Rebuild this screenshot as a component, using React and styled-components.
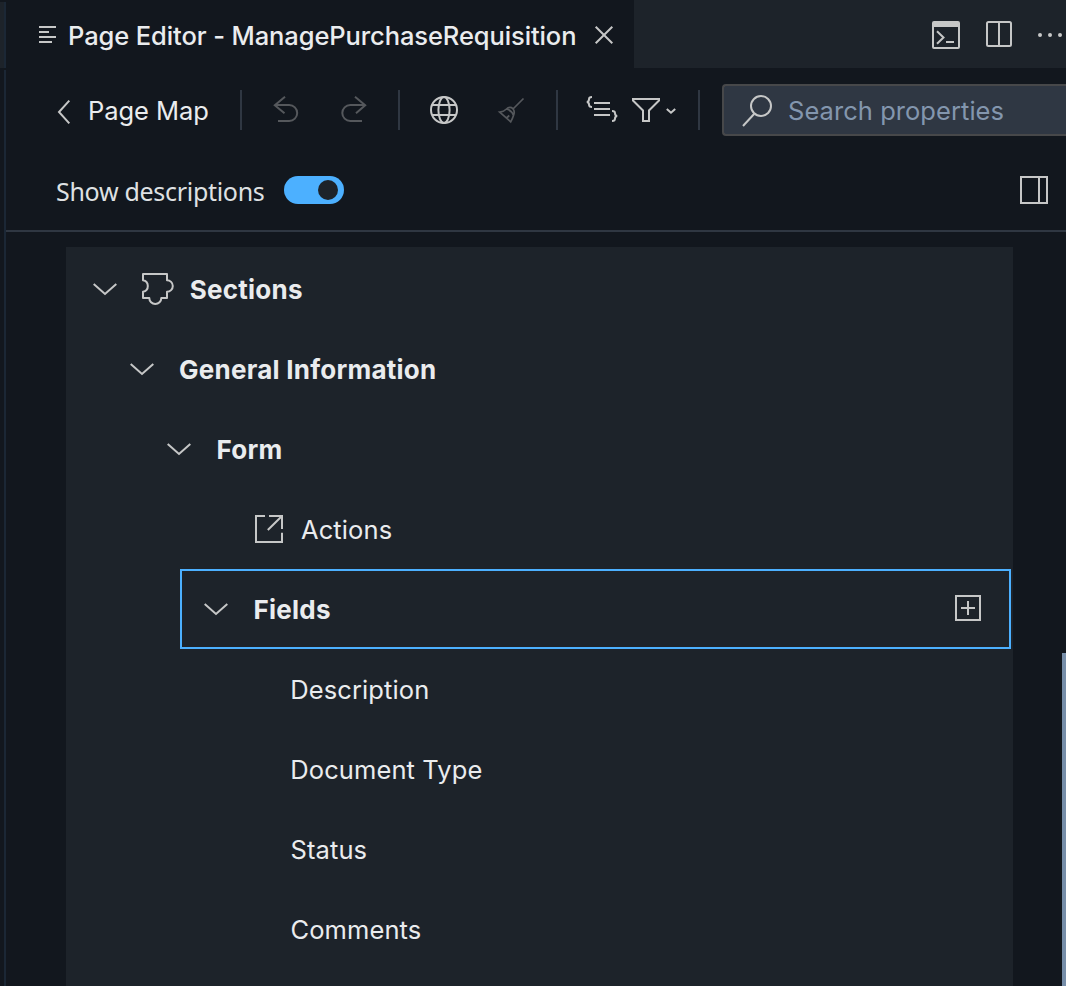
import React from "react";
import styled, { createGlobalStyle } from "styled-components";

const GlobalStyle = createGlobalStyle`
  * { box-sizing: border-box; }
  body { margin: 0; background: #12171e; overflow: hidden; }
`;

const Window = styled.div`
  display: flex;
  width: 100%;
  height: 986px;
  overflow: hidden;
  background: #12171e;
  color: #eaecee;
  font-family: Inter, "Liberation Sans", sans-serif;
  font-size: 25.5px;
`;

const Gutter = styled.div`
  flex: none;
  width: 6px;
  display: flex;
  flex-direction: column;
  gap: 2px;
  padding-top: 2px;
`;

const GutterPart = styled.div`
  height: ${(p) => p.$height || "auto"};
  flex: ${(p) => (p.$height ? "none" : 1)};
  background: ${(p) => p.$color};
  border-right: 2px solid #1b2735;
`;

const Editor = styled.div`
  flex: 1;
  min-width: 0;
  display: flex;
  flex-direction: column;
`;

const TabBar = styled.div`
  flex: none;
  display: flex;
  height: 68px;
  background: #1d232a;
`;

const Tab = styled.div`
  display: flex;
  align-items: center;
  width: 628px;
  padding: 2px 0 0 33px;
  background: #12171e;
`;

const TabActions = styled.div`
  display: flex;
  align-items: flex-start;
  gap: 26px;
  padding: 21px 0 0 298px;
`;

const Text = styled.span`
  white-space: nowrap;
  line-height: 32px;
  font-family: ${(p) => p.$font || "inherit"};
  font-size: ${(p) => p.$size || 25.5}px;
  font-weight: ${(p) => p.$weight || 400};
  letter-spacing: ${(p) => p.$spacing || 0}px;
  margin-left: ${(p) => p.$left || 0}px;
`;

const TabTitle = styled(Text)`
  width: 515px;
  margin-left: 11px;
  padding-top: 2px;
`;

const Icon = styled.svg`
  flex: none;
  display: block;
  overflow: visible;
  fill: none;
  stroke: ${(p) => (p.$dim ? "#55585c" : "#c6c7c7")};
  stroke-width: ${(p) => p.$stroke || 2};
  margin-left: ${(p) => p.$left || 0}px;
  margin-top: ${(p) => p.$top || 0}px;
`;

const Toolbar = styled.div`
  flex: none;
  display: flex;
  height: 52px;
  margin-top: 16px;
  padding-left: 52px;
`;

const BackLink = styled.div`
  display: flex;
  align-items: flex-start;
  width: 182px;
  padding-top: 11px;
`;

const ToolGroup = styled.div`
  display: flex;
  align-items: flex-start;
  width: ${(p) => p.$width}px;
  padding-top: 12px;
`;

const Separator = styled.div`
  flex: none;
  width: 2px;
  height: 40px;
  margin-top: 6px;
  background: #2f3742;
`;

const SearchBox = styled.div`
  flex: 1;
  display: flex;
  align-items: flex-start;
  min-width: 0;
  margin-left: 22px;
  padding: 9px 0 0 18px;
  overflow: hidden;
  color: #8396ae;
  background: #2f3743;
  border: 2px solid #47484a;
  border-right: 0;
  border-radius: 4px 0 0 4px;
`;

const OptionsBar = styled.div`
  flex: none;
  display: flex;
  align-items: flex-start;
  height: 96px;
  padding: 40px 18px 0 50px;
  border-bottom: 2px solid #2f3742;
`;

const OptionLabel = styled(Text)`
  width: 228px;
  margin-top: -1px;
  color: #dfe1e3;
`;

const Switch = styled.div`
  display: flex;
  justify-content: flex-end;
  width: 60px;
  height: 28px;
  padding: 4px 6px;
  border-radius: 14px;
  background: #4cb0ff;
`;

const Knob = styled.div`
  width: 20px;
  height: 20px;
  border-radius: 50%;
  background: #1d232a;
`;

const Spacer = styled.div`
  flex: 1;
`;

const Content = styled.div`
  flex: 1;
  display: flex;
  justify-content: space-between;
  min-height: 0;
`;

const Tree = styled.div`
  width: 947px;
  margin: 15px 0 0 60px;
  padding: 2px 2px 0 0;
  background: #1d232a;
`;

const Row = styled.div`
  display: flex;
  align-items: center;
  height: 80px;
  margin-left: ${(p) => p.$indent}px;
  padding: 0 28px 0 22px;
  border: 2px solid ${(p) => (p.$selected ? "#4cb0ff" : "transparent")};
`;

const RowLabel = styled(Text)`
  padding-top: 2px;
`;

const Scrollbar = styled.div`
  width: 4px;
  margin-top: 421px;
  background: #778ea9;
`;

const ChevronDown = () => (
  <Icon width="24" height="12" viewBox="0 0 24 12" $top={-1}>
    <path d="M.7.9 12 11 23.3.9" />
  </Icon>
);

const Puzzle = () => (
  <Icon width="32" height="32" viewBox="0 0 32 32" $left={25} $top={-1}>
    <path
      strokeLinejoin="round"
      d="M1 1H25V7.2A5.8 5.8 0 0 1 25 18.8V25H19.3A6 6 0 0 1 7.3 25H1V18.8A5.9 5.9 0 0 0 1 7.2Z"
    />
  </Icon>
);

const OpenSquare = () => (
  <Icon width="28" height="28" viewBox="0 0 28 28" $left={51}>
    <path d="M10 1H1V27H27V17.8M14 1H27V14M27 1 12.8 15" />
  </Icon>
);

const AddSquare = () => (
  <Icon width="26" height="26" viewBox="0 0 26 26" $top={-2}>
    <path d="M1 1H25V25H1ZM6 13H20M13 6V20" />
  </Icon>
);

const rows = [
  { label: "Sections", indent: 3, group: true, icon: <Puzzle />, gap: 15.7 },
  { label: "General Information", indent: 40, group: true, gap: 25 },
  { label: "Form", indent: 77, group: true, gap: 25.5 },
  { label: "Actions", indent: 114, icon: <OpenSquare />, gap: 18 },
  { label: "Fields", indent: 114, group: true, gap: 25.5, selected: true },
  { label: "Description", indent: 114, gap: 86.3 },
  { label: "Document Type", indent: 114, gap: 86.3 },
  { label: "Status", indent: 114, gap: 86.5 },
  { label: "Comments", indent: 114, gap: 86.5 },
];

function TreeRow({ row }) {
  return (
    <Row $indent={row.indent} $selected={row.selected}>
      {row.group && <ChevronDown />}
      {row.icon}
      <RowLabel
        $left={row.gap}
        $size={row.group ? 26 : 25.5}
        $weight={row.group ? 700 : 400}
        $spacing={row.group ? 0.25 : 0.1}
      >
        {row.label}
      </RowLabel>
      <Spacer />
      {row.selected && <AddSquare />}
    </Row>
  );
}

export default function App() {
  return (
    <>
      <GlobalStyle />
      <Window>
        <Gutter>
          <GutterPart $height="66px" $color="#1d232a" />
          <GutterPart $color="#12171e" />
        </Gutter>
        <Editor>
          <TabBar>
            <Tab>
              <Icon width="18" height="18" viewBox="0 0 18 18" $top={-2}>
                <path d="M0 2H17M0 7H10M0 12H17M0 17H13" />
              </Icon>
              <TabTitle $weight={500} $spacing={-0.1}>
                Page Editor - ManagePurchaseRequisition
              </TabTitle>
              <Icon width="18" height="18" viewBox="0 0 18 18" $left={12.4}>
                <path d="M.7.7 17.3 17.3M17.3.7.7 17.3" />
              </Icon>
            </Tab>
            <TabActions>
              <Icon width="28" height="28" viewBox="0 0 28 28">
                <rect x="1" y="1" width="26" height="26" rx="1" />
                <path d="M1 3.5H27" strokeWidth="5" />
                <path d="M5 10.3 11.5 16.5 5 22.7M14 21H22" />
              </Icon>
              <Icon width="26" height="26" viewBox="0 0 26 26">
                <rect x="1" y="1" width="24" height="24" rx="1.5" />
                <path d="M13 1V25" />
              </Icon>
              <Icon width="28" height="28" viewBox="0 0 28 28">
                <path d="M2 14h.01M12 14h.01M22 14h.01" strokeWidth="4" strokeLinecap="round" />
              </Icon>
            </TabActions>
          </TabBar>
          <Toolbar>
            <BackLink>
              <Icon width="12" height="24" viewBox="0 0 12 24" $top={5}>
                <path d="M11.3.7 1 12 11.3 23.3" />
              </Icon>
              <Text $left={18} $spacing={-0.05}>Page Map</Text>
            </BackLink>
            <Separator />
            <ToolGroup $width={156}>
              <Icon width="26" height="26" viewBox="0 0 26 26" $left={32} $dim>
                <path d="M11 .7.8 9.2 10.5 17.3M1 9H15.2A8 8 0 0 1 15.2 25H4" />
              </Icon>
              <Icon width="26" height="26" viewBox="0 0 26 26" $left={41} $dim>
                <path d="M14 .7 24.2 9.2 15 17.3M24 9H9.3A8 8 0 0 0 9.3 25H21" />
              </Icon>
            </ToolGroup>
            <Separator />
            <ToolGroup $width={156}>
              <Icon width="28" height="28" viewBox="0 0 28 28" $left={30}>
                <circle cx="14" cy="14" r="13" />
                <ellipse cx="14" cy="14" rx="5.6" ry="13" />
                <path d="M2 9H26M2 19H26" />
              </Icon>
              <Icon width="26" height="26" viewBox="0 0 26 26" $left={40} $top={2} $stroke={1.7} $dim>
                <path d="M25.5.5 15 11M8.5 11C10.5 9 13.2 9 14.8 10.6S16.7 14.5 15.5 17.5Q14.6 20.5 12.7 23.8L1.7 14.1Q5.8 13.7 8.5 11ZM8.5 11Q13.6 12.3 15.5 17.5M8.5 20 11.3 17.5" />
              </Icon>
            </ToolGroup>
            <Separator />
            <ToolGroup $width={140}>
              <Icon width="32" height="26" viewBox="0 0 32 26" $left={28}>
                <path d="M8 7H24M8 13H24M8 19H24M6 1Q3 1 3 3.3Q3 6 .7 6Q3 6 3 8.5Q3 11 6 11M26 15Q29 15 29 17.3Q29 20 31.3 20Q29 20 29 22.5Q29 25 26 25" />
              </Icon>
              <Icon width="28" height="24" viewBox="0 0 28 24" $left={14} $top={2}>
                <path d="M1 1H27V2.5L17 12.5V23H11V12.5L1 2.5Z" />
              </Icon>
              <Icon width="10" height="6" viewBox="0 0 10 6" $left={6} $top={12}>
                <path d="M.8.9 5 4.7 9.2.9" />
              </Icon>
            </ToolGroup>
            <Separator />
            <SearchBox>
              <Icon width="32" height="32" viewBox="0 0 32 32">
                <circle cx="19" cy="11" r="10" />
                <path d="M12.3 18.7 1 31" />
              </Icon>
              <Text $left={14} $spacing={0.05}>Search properties</Text>
            </SearchBox>
          </Toolbar>
          <OptionsBar>
            <OptionLabel $font={'"Noto Sans", sans-serif'} $size={25} $spacing={-0.3}>
              Show descriptions
            </OptionLabel>
            <Switch>
              <Knob />
            </Switch>
            <Spacer />
            <Icon width="28" height="28" viewBox="0 0 28 28">
              <path d="M1 1H27V27H1ZM19 1V27" />
            </Icon>
          </OptionsBar>
          <Content>
            <Tree>
              {rows.map((row) => (
                <TreeRow key={row.label} row={row} />
              ))}
            </Tree>
            <Scrollbar />
          </Content>
        </Editor>
      </Window>
    </>
  );
}
